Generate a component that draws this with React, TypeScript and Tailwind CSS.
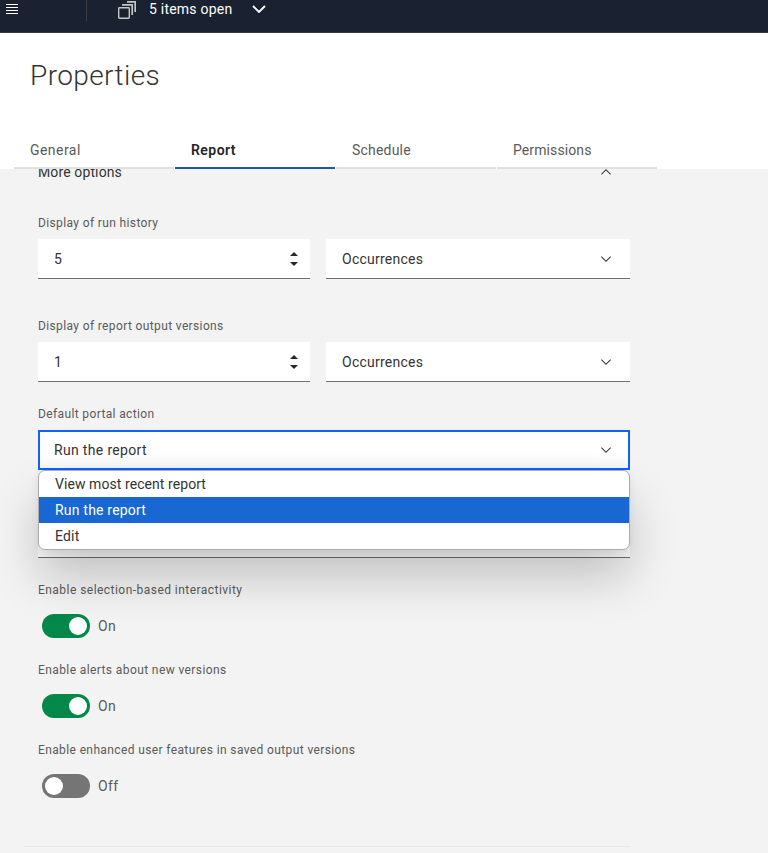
import React from "react";

const Chevron = ({ up = false, className = "" }: { up?: boolean; className?: string }) => (
  <svg viewBox="0 0 16 16" className={"size-4 shrink-0 fill-current " + className}>
    <path d={up ? "M8 5l5 5-.7.7L8 6.4l-4.3 4.3L3 10z" : "M8 11L3 6l.7-.7L8 9.6l4.3-4.3.7.7z"} />
  </svg>
);

const Label = ({ children, className }: { children: React.ReactNode; className: string }) => (
  <div className={"flex h-4 items-center whitespace-nowrap text-[12px] text-[#5a5a5a] " + className}>
    <span>{children}</span>
  </div>
);

const NumberField = ({ value }: { value: string }) => (
  <div className="flex h-10 w-[272px] items-center justify-between border-b border-[#6f6f6f] bg-white pl-4 pr-3">
    <span className="pt-0.5 text-[14px]">{value}</span>
    <svg viewBox="0 0 8 14" className="h-3.5 w-2 fill-[#262626]">
      <path d="M0 4L4 0l4 4zM0 10l4 4 4-4z" />
    </svg>
  </div>
);

const Select = ({ children, className }: { children: React.ReactNode; className: string }) => (
  <div className={"flex h-10 items-center justify-between text-[14px] " + className}>
    <span>{children}</span>
    <Chevron className="text-[#393939]" />
  </div>
);

const Toggle = ({ on }: { on: boolean }) => (
  <div className="ml-1 flex h-6 items-center gap-2">
    <div className={"flex h-6 w-12 items-center rounded-full px-[3px] " + (on ? "justify-end bg-[#04884a]" : "bg-[#757575]")}>
      <div className="size-[18px] rounded-full bg-white" />
    </div>
    <span className="text-[14px] tracking-[0.4px] text-[#5a5a5a]">{on ? "On" : "Off"}</span>
  </div>
);

const tabs = [
  { name: "General", style: "border-[#e0e0e0] text-[#5a5a5a] tracking-[0.45px]" },
  { name: "Report", style: "border-[#1f57a4] text-[#262626] font-semibold tracking-[0.45px]" },
  { name: "Schedule", style: "border-[#e0e0e0] text-[#5a5a5a] tracking-[0.2px]" },
  { name: "Permissions", style: "border-[#e0e0e0] text-[#5a5a5a] tracking-[0.1px]" },
];

export default function App() {
  return (
    <div className="flex h-[853px] w-[768px] flex-col overflow-hidden bg-[#f3f3f3] font-[Roboto,'Noto_Sans',sans-serif] text-[#333333]">
      <header className="flex h-[33px] shrink-0 items-start border-b border-[#393939] bg-[#1a2231] text-white">
        <svg viewBox="0 0 12 11" className="ml-1.5 mt-1 h-[11px] w-3 fill-white" shapeRendering="crispEdges">
          <path d="M0 0h12v1H0zM0 3h12v1H0zM0 6h12v1H0zM0 9h12v1H0z" />
        </svg>
        <div className="ml-[68px] h-[21px] w-px bg-[#3b3c3e]" />
        <svg viewBox="0 0 18 18" className="ml-[31px] mt-[1px] size-[18px]" fill="none" stroke="#c6c6c6" strokeWidth="1.4">
          <rect x=".7" y="6.7" width="10.6" height="10.6" rx=".7" />
          <path d="M4 3.8h10.2V14M9 .8h8.2V11" strokeWidth="1.7" />
        </svg>
        <span className="ml-[13px] h-[18px] w-[83px] whitespace-nowrap text-[14px] leading-[19px] tracking-[0.22px]">5 items open</span>
        <svg viewBox="0 0 14 8" className="ml-5 mt-[5px] h-2 w-3.5" fill="none" stroke="white" strokeWidth="1.8">
          <path d="M1 1l6 6 6-6" />
        </svg>
      </header>

      <section className="flex h-[136px] shrink-0 flex-col bg-white">
        <h1 className="ml-[30px] mt-[25px] h-9 text-[28px] font-light leading-9 tracking-[0.4px]">Properties</h1>
        <nav className="ml-3.5 mt-auto flex gap-px">
          {tabs.map((t) => (
            <div key={t.name} className={"flex h-9 w-40 items-start border-b-2 pl-4 text-[14px] leading-[34px] " + t.style}>
              {t.name}
            </div>
          ))}
        </nav>
      </section>

      <main className="min-h-0 flex-1 overflow-hidden">
        <div className="-mt-1.5 ml-[38px] flex w-[592px] flex-col">
          <div className="flex h-[18px] items-center justify-between pr-4 text-[14px]">
            <span className="tracking-[0.12px]">More options</span>
            <Chevron up className="text-[#393939]" />
          </div>

          <Label className="mt-[34px] tracking-[0.37px]">Display of run history</Label>
          <div className="mt-2 flex gap-4">
            <NumberField value="5" />
            <Select className="w-[304px] border-b border-[#6f6f6f] bg-white px-4 pt-px tracking-[0.25px]">Occurrences</Select>
          </div>

          <Label className="mt-[39px] tracking-[0.37px]">Display of report output versions</Label>
          <div className="mt-2 flex gap-4">
            <NumberField value="1" />
            <Select className="w-[304px] border-b border-[#6f6f6f] bg-white px-4 pt-px tracking-[0.25px]">Occurrences</Select>
          </div>

          <Label className="mt-6 tracking-[0.37px]">Default portal action</Label>
          <div className="relative mt-2">
            <Select className="border-2 border-[#0f62fe] bg-linear-to-b from-white from-60% to-[#f6f6f6] px-3.5 tracking-[0.33px]">Run the report</Select>
            <div className="absolute left-0 top-10 z-10 h-20 w-[592px] rounded-[7px] border border-[#ababab] bg-white text-[14px] tracking-[0.07px] shadow-[0_28px_48px_rgba(0,0,0,0.2),0_2px_8px_rgba(0,0,0,0.06)]">
              <div className="flex h-[26px] items-center pl-4">View most recent report</div>
              <div className="flex h-[26px] items-center bg-[#1967d2] pl-4 tracking-[0.2px] text-white">Run the report</div>
              <div className="flex h-[26px] items-center pl-4 tracking-[0.2px]">Edit</div>
            </div>
          </div>
          <div className="mt-12 h-10 border-b border-[#6f6f6f] bg-white" />

          <Label className="mt-6 tracking-[0.46px]">Enable selection-based interactivity</Label>
          <div className="mt-4"><Toggle on /></div>
          <Label className="mt-6 tracking-[0.4px]">Enable alerts about new versions</Label>
          <div className="mt-4"><Toggle on /></div>
          <Label className="mt-6 tracking-[0.38px]">Enable enhanced user features in saved output versions</Label>
          <div className="mt-4"><Toggle on={false} /></div>
          <div className="-ml-3.5 mt-12 h-px w-[606px] bg-[#e8e8e8]" />
        </div>
      </main>
    </div>
  );
}
